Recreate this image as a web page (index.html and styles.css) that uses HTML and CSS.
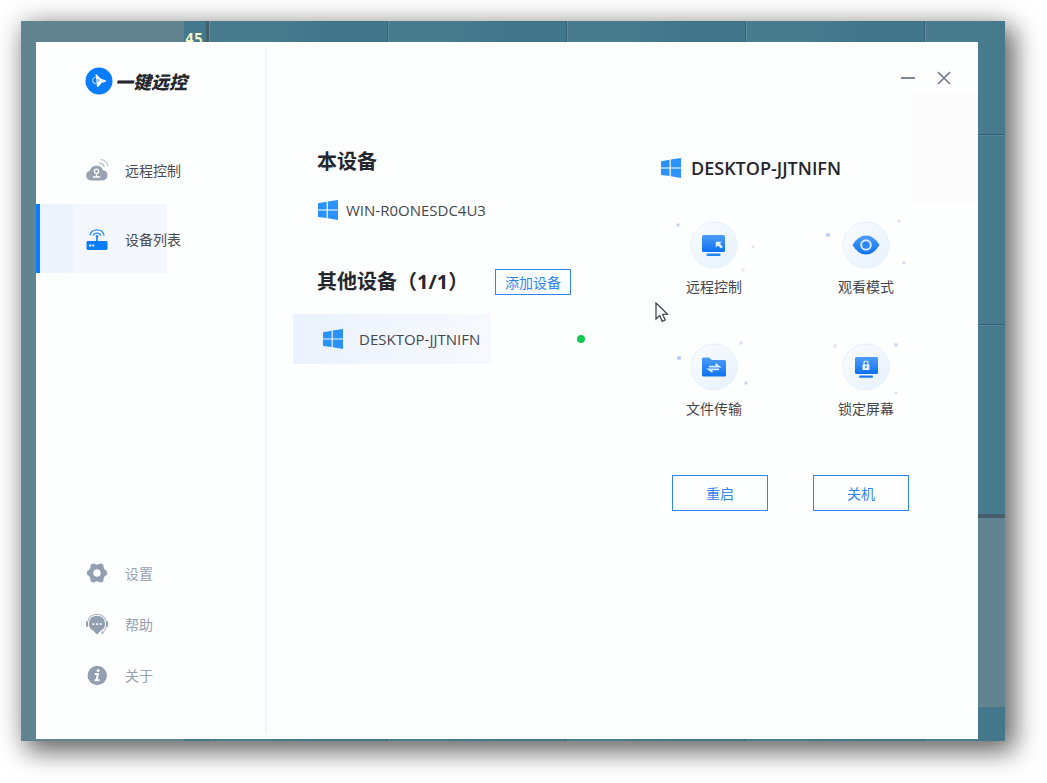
FILE: index.html
```html
<!DOCTYPE html>
<html lang="zh-CN">
<head>
    <meta charset="UTF-8">
    <meta name="viewport" content="width=device-width, initial-scale=1.0">
    <title>一键远控</title>
    <link rel="stylesheet" href="styles.css">
</head>
<body>
    <svg class="defs" width="0" height="0" aria-hidden="true">
        <defs>
            <linearGradient id="azul" x1="0" y1="0" x2="0" y2="1">
                <stop offset="0" stop-color="#4f9cf8"/>
                <stop offset="1" stop-color="#0d72f2"/>
            </linearGradient>
            <linearGradient id="disc" x1="0" y1="0" x2="1" y2="1">
                <stop offset="0" stop-color="#fbfcff"/>
                <stop offset="1" stop-color="#e6f1fe"/>
            </linearGradient>
        </defs>
        <symbol id="windows" viewBox="0 0 20 20">
            <path fill="#2a93fb" d="M0 3.2L8.6 1.8V9.4H0zM9.8 1.6L20 0V9.4H9.8zM0 10.6H8.6V18L0 16.9zM9.8 10.6H20V20L9.8 18.3z"/>
        </symbol>
    </svg>

    <div class="desktop">
        <span class="counter">45</span>
        <div class="window">
            <aside class="sidebar">
                <div class="logo">
                    <svg width="28" height="28" viewBox="0 0 28 28">
                        <circle cx="14" cy="14" r="13.5" fill="#0a7cff"/>
                        <path fill="#fff" d="M10.6 7.2Q11 6.800 11.600 7.300L15.500 11.500L20.800 13.400Q21.800 14 20.800 14.600L16.600 16L13.400 19.800Q12.400 20.600 12 19.400L11.500 15.500z"/>
                        <path fill="none" stroke="#9fcdff" stroke-width="1.1" d="M10.8 10.300Q7.500 10.800 7.600 13.600Q7.800 16.400 11.300 16.600"/>
                        <circle cx="12.800" cy="13.500" r="1.800" fill="#8fc4ff"/>
                    </svg>
                    <span>一键远控</span>
                </div>

                <nav class="menu">
                    <a href="#remote">
                        <svg width="24" height="24" viewBox="0 0 24 24">
                            <path fill="#98a2b3" d="M6 22.5A5 5 0 0 1 4.8 12.7A7 7 0 0 1 18 12.2A5.2 5.2 0 0 1 18 22.5z"/>
                            <circle cx="11.5" cy="13.2" r="2.1" fill="none" stroke="#fff" stroke-width="1.3"/>
                            <path fill="none" stroke="#fff" stroke-width="1.3" d="M11.5 15.4V18.6M8 19H15.2"/>
                            <path fill="none" stroke="#b4bbc8" stroke-width="1.2" d="M14.5 5.2Q18.4 5.4 19.3 9.2M15.8 1.5Q22 2.2 22.8 8"/>
                        </svg>
                        远程控制
                    </a>
                    <a href="#devices" class="active">
                        <svg width="24" height="24" viewBox="0 0 24 24">
                            <rect x="1.5" y="14" width="21" height="9" rx="1.4" fill="#0a7cff"/>
                            <path stroke="#0a7cff" stroke-width="1.6" d="M12 9.5V14.5"/>
                            <circle cx="12" cy="9.2" r="1.2" fill="#0a7cff"/>
                            <path fill="none" stroke="#2a8bff" stroke-width="1.3" d="M8.2 8.8A4 4 0 0 1 15.8 8.8M4.8 8.500A7.4 7.4 0 0 1 19.2 8.500"/>
                            <path fill="#fff" d="M4.2 17.6H6.2V19.4H4.2zM7.4 17.6H9.2V19.4H7.4z"/>
                        </svg>
                        设备列表
                    </a>
                </nav>

                <nav class="menu menu-bottom">
                    <a href="#settings">
                        <svg width="24" height="24" viewBox="0 0 24 24">
                            <circle cx="12" cy="12" r="6" fill="none" stroke="#929fb1" stroke-width="5"/>
                            <path stroke="#929fb1" stroke-width="6" stroke-linecap="round" d="M4.8 12H5.200M18.800 12H19.2M8.4 5.600L8.5 6M15.5 18L15.6 18.4M15.6 5.6L15.5 6M8.5 18L8.4 18.4"/>
                            <circle cx="12" cy="12" r="3.5" fill="#fff"/>
                        </svg>
                        设置
                    </a>
                    <a href="#help">
                        <svg width="24" height="24" viewBox="0 0 24 24">
                            <path fill="#929fb1" d="M12 3.8A8 8 0 0 1 15.5 19L12 22.5L8.5 19A8 8 0 0 1 12 3.8z"/>
                            <path fill="none" stroke="#aab4c2" stroke-width="1.1" d="M3 9A9.4 9.4 0 0 1 21 9M21 15Q20 19.5 17.5 20.5"/>
                            <path stroke="#929fb1" stroke-width="2" stroke-linecap="round" d="M2 10V14M22 10V14"/>
                            <circle cx="17.3" cy="20.7" r="1.3" fill="#aab4c2"/>
                            <path fill="#fff" d="M7.4 11.3H9.3V13H7.4zM11.1 11.3H13V13H11.1zM14.8 11.3H16.7V13H14.8z"/>
                        </svg>
                        帮助
                    </a>
                    <a href="#about">
                        <svg width="24" height="24" viewBox="0 0 24 24">
                            <circle cx="12.3" cy="12.5" r="9.7" fill="#929fb1"/>
                            <circle cx="13.1" cy="7.6" r="1.5" fill="#fff"/>
                            <path fill="none" stroke="#fff" stroke-width="2" d="M9.8 11H12.8L11.6 17.2H14.6M9.5 17.2H12"/>
                        </svg>
                        关于
                    </a>
                </nav>
            </aside>

            <main class="main">
                <header class="titlebar">
                    <button type="button" aria-label="最小化">
                        <svg width="16" height="16" viewBox="0 0 16 16"><path stroke="#8085a0" stroke-width="2" d="M1 8H15"/></svg>
                    </button>
                    <button type="button" aria-label="关闭">
                        <svg width="16" height="16" viewBox="0 0 16 16"><path stroke="#74798f" stroke-width="1.7" d="M2 2L14 14M14 2L2 14"/></svg>
                    </button>
                </header>

                <div class="content">
                    <section class="devices">
                        <h2>本设备</h2>
                        <div class="device own">
                            <svg width="20" height="20"><use href="#windows"/></svg>
                            <span>WIN-R0ONESDC4U3</span>
                        </div>
                        <div class="heading">
                            <h2>其他设备（1/1）</h2>
                            <button type="button" class="btn btn-add">添加设备</button>
                        </div>
                        <div class="device selected">
                            <svg width="20" height="20"><use href="#windows"/></svg>
                            <span>DESKTOP-JJTNIFN</span>
                            <i class="online"></i>
                        </div>
                    </section>

                    <section class="detail">
                        <h3>
                            <svg width="20" height="20"><use href="#windows"/></svg>
                            DESKTOP-JJTNIFN
                        </h3>
                        <div class="actions">
                            <button type="button">
                                <svg width="96" height="60" viewBox="-48 -30 96 60">
                                    <circle r="23" fill="url(#disc)" stroke="#e6f0fd"/>
                                    <rect x="-12" y="-10" width="23" height="17" rx="1.5" fill="url(#azul)"/>
                                    <rect x="-7.500" y="8.6" width="14" height="2.4" rx="1" fill="#2585f6"/>
                                    <path fill="#e4f1ff" d="M1.8 -3.2H7.8L5.9 -1.3L8.8 1.8L7 3.6L4 .6L1.8 2.6z"/>
                                    <circle cx="-36" cy="-20" r="1.8" fill="#c9d4fa"/>
                                    <circle cx="39" cy="2" r="1.6" fill="#dbe0f8"/>
                                    <circle cx="29" cy="25" r="2" fill="#edf0fc"/>
                                </svg>
                                远程控制
                            </button>
                            <button type="button">
                                <svg width="96" height="60" viewBox="-48 -30 96 60">
                                    <circle r="23" fill="url(#disc)" stroke="#e6f0fd"/>
                                    <path fill="url(#azul)" d="M-13.5 0Q-8 -9.500 0 -9.500T13.5 0Q8 9.500 0 9.500T-13.5 0z"/>
                                    <circle r="4.8" fill="#2f86f5" stroke="#d8eaff" stroke-width="2"/>
                                    <circle cx="-38" cy="-10" r="2" fill="#bccafa"/>
                                    <circle cx="33" cy="-24" r="1.7" fill="#e0e4fb"/>
                                    <circle cx="38" cy="18" r="1.6" fill="#cfd5f8"/>
                                </svg>
                                观看模式
                            </button>
                            <button type="button">
                                <svg width="96" height="60" viewBox="-48 -30 96 60">
                                    <circle r="23" fill="url(#disc)" stroke="#e6f0fd"/>
                                    <path fill="url(#azul)" d="M-12 -8Q-12 -9.5 -10.5 -9.5H-5L-2 -7H10.5Q12 -7 12 -5.5V8Q12 9.5 10.5 9.5H-10.5Q-12 9.5 -12 8z"/>
                                    <path fill="none" stroke="#d8eaff" stroke-width="1.8" d="M-5 -.4H5L1.5 -3M5 2.4H-5L-1.5 5"/>
                                    <circle cx="-35" cy="-9" r="2.1" fill="#b9cbfa"/>
                                    <circle cx="27" cy="-24" r="1.9" fill="#e0e4fb"/>
                                    <circle cx="32" cy="16" r="1.7" fill="#cbd3f8"/>
                                </svg>
                                文件传输
                            </button>
                            <button type="button">
                                <svg width="96" height="60" viewBox="-48 -30 96 60">
                                    <circle r="23" fill="url(#disc)" stroke="#e6f0fd"/>
                                    <rect x="-11" y="-10" width="23" height="17" rx="1.5" fill="url(#azul)"/>
                                    <rect x="-7" y="8.6" width="14" height="2.2" rx="1" fill="#1a7cf5"/>
                                    <rect x="-3.5" y="-2.6" width="7" height="5.6" rx=".6" fill="#e4f1ff"/>
                                    <path fill="none" stroke="#e4f1ff" stroke-width="1.2" d="M-2 -2V-4Q-2 -6 0 -6T2 -4V-2"/>
                                    <circle r=".9" fill="#2b84f5"/>
                                    <path fill="#e0e4f8" d="M-33.500 -19.500L-31 -24L-28.500 -19.500z"/>
                                    <path fill="#ccd4f5" d="M27.500 -23.500H32.500L30 -19.500z"/>
                                    <circle cx="30" cy="26" r="1.4" fill="#dde3f8"/>
                                </svg>
                                锁定屏幕
                            </button>
                        </div>
                        <div class="power">
                            <button type="button" class="btn">重启</button>
                            <button type="button" class="btn">关机</button>
                        </div>
                    </section>
                </div>
            </main>
        </div>

        <svg class="cursor" width="14" height="21" viewBox="0 0 14 21">
            <path fill="#fff" stroke="#45454f" stroke-width="1.3" d="M1 1V17L4.700 13.600L7.200 19.300L10.200 18L7.700 12.400L12.600 12.200z"/>
        </svg>
    </div>
</body>
</html>
```
FILE: styles.css
```css
* {
    box-sizing: border-box;
}
body {
    margin: 0;
    padding: 21px 42px 42px 21px;
    min-height: 100vh;
    display: flex;
    background: #fff;
    font-family: "Open Sans", "Noto Sans CJK SC", sans-serif;
    font-size: 14px;
    color: #45474f;
}
.defs {
    position: absolute;
}
button {
    font: inherit;
    color: inherit;
    background: none;
    border: none;
    padding: 0;
    cursor: pointer;
}
h2, h3 {
    margin: 0;
    color: #25262e;
}

/* remote desktop behind the window */
.desktop {
    position: relative;
    flex: 1;
    display: flex;
    padding: 21px 27px 2px 15px;
    background:
        linear-gradient(#44778a, #44778a) right bottom / 27px 34px no-repeat,
        linear-gradient(#455f6c 4px, #628490 4px) right bottom / 27px 227px no-repeat,
        linear-gradient(#365f71 1px, #55889b 1px, #55889b 2px, transparent 2px) right 113px / 27px 190px repeat-y,
        linear-gradient(#628490, #628490) left top / 163px 100% no-repeat,
        linear-gradient(90deg, #44798d 22px, #44606c 22px, #44606c 25px, transparent 25px) 163px 0 / 100% 21px no-repeat,
        linear-gradient(90deg, #37647a 1px, #5b8b9c 1px, #5b8b9c 2px, #487b8e 2px, #487b8e 60px, #41758a 120px) 187px 0 / 179px 100%;
    box-shadow: 8px 9px 24px 2px rgba(0, 0, 0, .55), 0 0 26px rgba(0, 0, 0, .15);
}
.counter {
    position: absolute;
    left: 164px;
    top: 10px;
    font: bold 15px/18px "DejaVu Sans Mono", monospace;
    color: #f4f8c8;
}
.window {
    position: relative;
    flex: 1;
    display: flex;
    background: linear-gradient(#fcfcfd, #fcfcfd) right 51px / 66px 110px no-repeat #fdfefe;
}

/* sidebar */
.sidebar {
    width: 231px;
    display: flex;
    flex-direction: column;
    padding: 25px 0 39px;
    background: linear-gradient(#f2f3f9, #f2f3f9) right center / 2px calc(100% - 12px) no-repeat;
}
.logo {
    display: flex;
    align-items: center;
    gap: 2px;
    height: 28px;
    margin: 0 0 40px 49px;
    font: italic 900 18px/28px "Noto Sans CJK SC", sans-serif;
    color: #25262e;
}
.menu a {
    display: flex;
    align-items: center;
    gap: 16px;
    height: 69px;
    padding-left: 45px;
    border-left: 4px solid transparent;
    color: #4a4c55;
    text-decoration: none;
}
.menu .active {
    border-left-color: #0a7cff;
    background: linear-gradient(90deg, #ecf3fd 30px, #f4f7fe 36px) left / 127px 100% no-repeat;
}
.menu-bottom {
    margin-top: auto;
}
.menu-bottom a {
    height: 51px;
    color: #98a0b2;
}

/* content */
.main {
    flex: 1;
    display: flex;
    flex-direction: column;
}
.titlebar {
    display: flex;
    justify-content: flex-end;
    gap: 4px;
    padding: 20px 18px 0 0;
}
.titlebar button {
    display: flex;
    align-items: center;
    justify-content: center;
    width: 32px;
    height: 32px;
}
.content {
    display: flex;
}
.devices {
    flex: 1;
    padding: 53px 27px 0 26px;
}
.devices h2 {
    font-size: 20px;
    line-height: 30px;
    padding-left: 24px;
}
.device {
    display: flex;
    align-items: center;
    font-size: 15px;
}
.own {
    height: 30px;
    margin: 18px 0 42px;
    padding-left: 25px;
    gap: 8px;
}
.heading {
    display: flex;
    align-items: center;
    justify-content: space-between;
    padding-right: 40px;
}
.selected {
    height: 50px;
    margin-top: 17px;
    padding: 0 26px 0 30px;
    gap: 16px;
    background: linear-gradient(90deg, #ebf2fd, #f7f9fe) left / 198px 100% no-repeat;
}
.online {
    width: 8px;
    height: 8px;
    margin-left: auto;
    border-radius: 50%;
    background: #10c850;
}
.btn {
    width: 96px;
    height: 36px;
    border: 1px solid #2f86f6;
    color: #2f86f6;
}
.btn-add {
    width: 76px;
    height: 26px;
}

/* selected device */
.detail {
    width: 340px;
    padding: 62px 36px 0 0;
}
.detail h3 {
    display: flex;
    align-items: center;
    gap: 10px;
    padding-left: 23px;
    font-size: 18px;
    font-weight: 600;
    line-height: 24px;
}
.actions {
    display: grid;
    grid-template-columns: 1fr 1fr;
    gap: 38px 0;
    margin: 35px 0 54px;
}
.actions button {
    display: flex;
    flex-direction: column;
    align-items: center;
    line-height: 24px;
}
.power {
    display: flex;
    gap: 45px;
    padding-left: 34px;
}
.cursor {
    position: absolute;
    left: 634px;
    top: 281px;
}
```
